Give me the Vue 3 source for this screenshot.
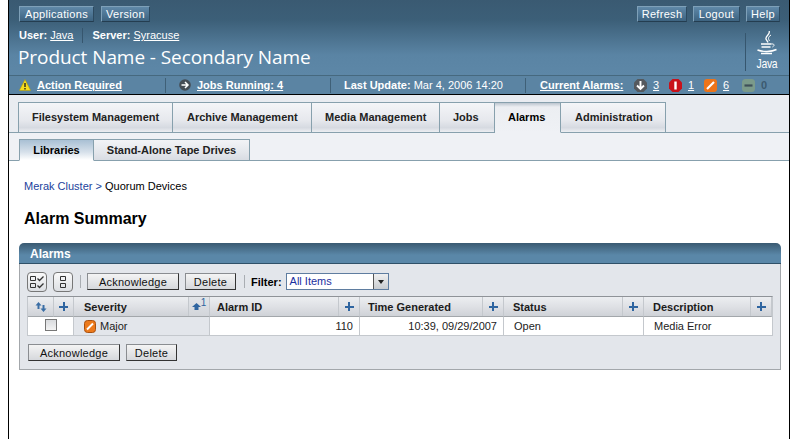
<template>
  <div class="page">
    <header class="masthead">
      <div class="top-row">
        <div class="btn-group left">
          <a class="mast-btn w-apps">Applications</a>
          <a class="mast-btn w-version">Version</a>
        </div>
        <div class="btn-group">
          <a class="mast-btn w-refresh">Refresh</a>
          <a class="mast-btn w-logout">Logout</a>
          <a class="mast-btn w-help">Help</a>
        </div>
      </div>
      <div class="brand-row">
        <div>
          <div class="user-row">
            <span class="user-cell"><b>User:</b> <u>Java</u></span>
            <span class="user-cell"><b>Server:</b> <u>Syracuse</u></span>
          </div>
          <div class="product">Product Name - Secondary Name</div>
        </div>
        <div class="java-logo">
          <svg width="22" height="26" viewBox="0 0 22 26" fill="none" stroke="#fff">
            <path d="M13 0c2 3-4 5-3 8 .4 1.200 1.400 2 2 3.500" stroke-width="1.300" />
            <path d="M15 4c-3 2-3 3.500-1.500 6" stroke-width="1" />
            <path d="M5 13h10M5.500 16h9" stroke-width="1.300" />
            <path d="M15 13c3.500-.5 4 1.500 1.500 3" stroke-width="1" />
            <path d="M1.500 19c5 2 14 2 19-.5M5 22.500h11" stroke-width="1.400" />
          </svg>
          <span class="java-word">Java</span>
        </div>
      </div>
    </header>

    <div class="status-bar">
      <div class="status-cell cell-action">
        <svg width="12" height="12" viewBox="0 0 12 12">
          <path d="M6 .5 11.700 11.500H.3z" fill="#f5dc1e" stroke="#b59a00" stroke-width=".5" />
          <path d="M5.300 4h1.400v4H5.300zM5.300 9h1.400v1.400H5.300z" fill="#222" />
        </svg>
        <u>Action Required</u>
      </div>
      <div class="status-cell cell-jobs">
        <svg width="12" height="12" viewBox="0 0 12 12">
          <circle cx="6" cy="6" r="5.800" fill="#444c54" />
          <path d="M2.500 6h6M6 3l3 3-3 3" fill="none" stroke="#fff" stroke-width="1.500" />
        </svg>
        <u>Jobs Running: 4</u>
      </div>
      <div class="status-cell cell-update"><b>Last Update:</b>&nbsp;Mar 4, 2006 14:20</div>
      <div class="status-cell cell-alarms">
        <u class="alarms-label">Current Alarms:</u>
        <span class="alarm-count w-down">
          <svg width="13" height="13" viewBox="0 0 13 13">
            <path d="M3.500 0h6L13 3.500v6L9.500 13h-6L0 9.500v-6z" fill="#55595e" />
            <path d="M6.500 2v8M3 6.500l3.500 3.500 3.500-3.500" fill="none" stroke="#fff" stroke-width="1.900" />
          </svg>
          <u>3</u>
        </span>
        <span class="alarm-count w-crit">
          <svg width="13" height="13" viewBox="0 0 13 13">
            <path d="M3.500 0h6L13 3.500v6L9.500 13h-6L0 9.500v-6z" fill="#c9111a" />
            <path d="M6.500 2.500v8" stroke="#fff" stroke-width="2.400" />
          </svg>
          <u>1</u>
        </span>
        <span class="alarm-count w-major">
          <svg width="13" height="13" viewBox="0 0 13 13">
            <rect width="13" height="13" rx="3" fill="#ee7418" />
            <path d="M3 10l7-7" stroke="#fff" stroke-width="2.200" />
          </svg>
          <u>6</u>
        </span>
        <span class="alarm-count zero">
          <svg width="13" height="13" viewBox="0 0 13 13">
            <rect width="13" height="13" rx="3.500" fill="#7b9a8a" />
            <path d="M2.500 6.500h8" stroke="#3f4f58" stroke-width="2.200" />
          </svg>
          0
        </span>
      </div>
    </div>

    <nav class="tabs">
      <a
        v-for="tab in tabs"
        :key="tab.label"
        :class="['tab', { active: tab.label === 'Alarms' }]"
        :style="{ width: tab.width + 'px', paddingLeft: tab.pad + 'px' }"
      >{{ tab.label }}</a>
    </nav>
    <nav class="subtabs">
      <a class="subtab active sub-libraries">Libraries</a>
      <a class="subtab sub-drives">Stand-Alone Tape Drives</a>
    </nav>

    <main class="content">
      <div class="breadcrumb"><span class="crumb-link">Merak Cluster &gt;</span> Quorum Devices</div>
      <h1 class="page-title">Alarm Summary</h1>

      <section class="panel">
        <div class="panel-head">Alarms</div>
        <div class="panel-body">
          <div class="toolbar">
            <button class="icon-btn">
              <svg width="14" height="14" viewBox="0 0 14 14" fill="none" stroke="#333">
                <path d="M.5 1.500h5v4h-5zM.5 8.500h5v4h-5z" />
                <path d="M7.500 3.500l2 2 4-4M7.500 10.500l2 2 4-4" stroke-width="1.300" />
              </svg>
            </button>
            <button class="icon-btn">
              <svg width="8" height="14" viewBox="0 0 8 14" fill="none" stroke="#333">
                <path d="M1.500 1.500h5v4h-5zM1.500 8.500h5v4h-5z" />
              </svg>
            </button>
            <span class="sep"></span>
            <button class="btn btn-ack">Acknowledge</button>
            <button class="btn btn-del">Delete</button>
            <span class="sep"></span>
            <label class="filter-label">Filter:</label>
            <div class="select">
              <span class="select-value">All Items</span>
              <span class="select-arrow"></span>
            </div>
          </div>

          <div class="grid">
            <div class="th th-sort">
              <svg width="12" height="10" viewBox="0 0 12 10" fill="#3a6ea5">
                <path d="M3.500 0 6.500 3.500H4.500V7H2.500V3.500H.5zM8.500 10 5.500 6.500h2V3h2v3.500h2z" />
              </svg>
            </div>
            <div class="th th-plus"><span class="plus"></span></div>
            <div class="th th-label th-severity">
              <span class="th-text">Severity</span>
              <span class="th-action">
                <svg width="9" height="7" viewBox="0 0 9 7" fill="#2f65a0"><path d="M4.500 0l4.500 4H6.500v3h-4V4H0z" /></svg>
                <sup class="sort-rank">1</sup>
              </span>
            </div>
            <div class="th th-label" v-for="col in columns" :key="col.label">
              <span class="th-text" :style="{ paddingLeft: col.pad + 'px' }">{{ col.label }}</span>
              <span class="th-action"><span class="plus"></span></span>
            </div>

            <div class="td td-check"><span class="checkbox"></span></div>
            <div class="td td-severity">
              <svg width="12" height="13" viewBox="0 0 12 13">
                <rect x=".5" y=".5" width="11" height="12" rx="3" fill="#ec7a1c" stroke="#a8500f" />
                <path d="M3 9.500l6-6" stroke="#fff" stroke-width="2" />
              </svg>
              Major
            </div>
            <div class="td right">110</div>
            <div class="td right">10:39, 09/29/2007</div>
            <div class="td">Open</div>
            <div class="td">Media Error</div>
          </div>

          <div class="bottom-actions">
            <button class="btn btn-ack">Acknowledge</button>
            <button class="btn btn-del">Delete</button>
          </div>
        </div>
      </section>
    </main>
  </div>
</template>

<script setup>
const tabs = [
  { label: 'Filesystem Management', width: 155, pad: 13 },
  { label: 'Archive Management', width: 139, pad: 14 },
  { label: 'Media Management', width: 128, pad: 13 },
  { label: 'Jobs', width: 55, pad: 13 },
  { label: 'Alarms', width: 66, pad: 13 },
  { label: 'Administration', width: 105, pad: 14 },
];

const columns = [
  { label: 'Alarm ID', pad: 7 },
  { label: 'Time Generated', pad: 8 },
  { label: 'Status', pad: 9 },
  { label: 'Description', pad: 9 },
];
</script>

<style>
html, body {
  margin: 0;
  background: #fff;
}
</style>

<style scoped>
.page {
  box-sizing: border-box;
  width: 782px;
  min-height: 439px;
  height: 439px;
  overflow: hidden;
  margin-left: 8px;
  border-left: 1px solid #000;
  border-right: 1px solid #000;
  font-family: "Liberation Sans", Arial, sans-serif;
  font-size: 11px;
  color: #000;
  background: #fff;
}

.masthead {
  height: 75px;
  box-sizing: border-box;
  padding: 6px 9px 0 10px;
  color: #fff;
  background: linear-gradient(#3a5a72 0, #3c5f78 20px, #5a84a4 55px, #5d87a7 75px);
}

.top-row {
  display: flex;
  justify-content: space-between;
}

.btn-group {
  display: flex;
  gap: 6px;
}

.btn-group.left {
  gap: 7px;
}

.mast-btn {
  height: 16px;
  line-height: 15px;
  box-sizing: border-box;
  text-align: center;
  color: #fff;
  background: linear-gradient(#5f88a8, #3d6380);
  border: 1px solid;
  border-color: #7ea0b8 #2d4a60 #243d50 #7ea0b8;
  letter-spacing: 0.3px;
}

.w-apps { width: 75px; }
.w-version { width: 49px; }
.w-refresh { width: 50px; }
.w-logout { width: 47px; }
.w-help { width: 34px; }

.brand-row {
  display: flex;
  justify-content: space-between;
  margin-top: 6px;
}

.user-row {
  display: flex;
  height: 15px;
  line-height: 15px;
}

.user-cell {
  padding-right: 9px;
  margin-right: 9px;
  border-right: 1px solid #36566e;
}

.user-cell:last-child {
  border-right: none;
}

.product {
  font-family: "Open Sans", sans-serif;
  font-size: 19px;
  line-height: 26px;
  letter-spacing: -0.07px;
  margin: 1px 0 0 -1px;
}

.java-logo {
  display: flex;
  flex-direction: column;
  align-items: center;
  width: 44px;
  height: 38px;
  border-left: 1px solid #36566e;
  margin-right: -9px;
  margin-top: 5px;
  padding-right: 1px;
  box-sizing: border-box;
}

.java-logo svg {
  margin-top: -2px;
  flex: none;
}

.java-word {
  font-size: 13px;
  line-height: 12px;
  letter-spacing: -0.4px;
  margin-top: 1px;
  transform: scaleX(0.8);
}

.status-bar {
  display: flex;
  height: 20px;
  box-sizing: border-box;
  align-items: center;
  color: #fff;
  background: #5b84a3;
  border-top: 1px solid #46697f;
  border-bottom: 1px solid #000;
  font-weight: bold;
}

.status-bar u {
  text-underline-offset: 1px;
}

.status-cell {
  display: flex;
  align-items: center;
  height: 15px;
  box-sizing: border-box;
  border-right: 1px solid #3f6077;
}

.status-cell svg {
  flex: none;
}

.cell-action {
  width: 157px;
  padding-left: 10px;
  gap: 6px;
}

.cell-jobs {
  width: 165px;
  padding-left: 13px;
  gap: 6px;
}

.cell-update {
  width: 195px;
  padding-left: 13px;
  font-weight: normal;
}

.cell-alarms {
  flex: 1;
  padding-left: 14px;
  border-right: none;
}

.alarms-label {
  width: 94px;
}

.alarm-count {
  display: flex;
  align-items: center;
  gap: 6px;
  font-weight: normal;
  width: 35px;
}

.w-major {
  width: 38px;
}

.zero {
  color: #3c5a70;
  font-weight: bold;
}

.tabs {
  display: flex;
  height: 38px;
  box-sizing: border-box;
  padding: 7px 0 0 9px;
  background: #e9ecf1;
  border-bottom: 1px solid #87a0ad;
}

.tab {
  height: 31px;
  box-sizing: border-box;
  display: flex;
  align-items: center;
  padding-bottom: 1px;
  font-weight: bold;
  color: #222;
  background: linear-gradient(#f4f5f8 0, #e6e8ed 60%, #d6dae1 85%, #eceef2 100%);
  border: 1px solid #87a0ad;
  border-left: none;
}

.tab:first-child {
  border-left: 1px solid #87a0ad;
}

.tab.active {
  background: linear-gradient(#bcc5cf 0, #eceef2 4px, #eff1f5 100%);
  border-bottom-color: #eff1f5;
  color: #000;
}

.subtabs {
  display: flex;
  height: 28px;
  box-sizing: border-box;
  padding: 6px 0 0 10px;
  background: #eff1f5;
  border-bottom: 1px solid #87a0ad;
}

.subtab {
  height: 22px;
  box-sizing: border-box;
  display: flex;
  align-items: center;
  justify-content: center;
  font-weight: bold;
  color: #222;
  background: linear-gradient(#f2f3f6 0, #e4e7ec 60%, #d8dce3 100%);
  border: 1px solid #87a0ad;
  border-left: none;
}

.sub-libraries {
  width: 75px;
  border-left: 1px solid #87a0ad;
}

.sub-drives {
  width: 156px;
}

.subtab.active {
  background: linear-gradient(#a9c0d4 0, #d6e0ea 60%, #fff 100%);
  border-bottom-color: #fff;
  color: #000;
}

.content {
  padding-top: 19px;
}

.breadcrumb {
  padding-left: 15px;
  line-height: 13px;
}

.crumb-link {
  color: #1c3f9c;
}

.page-title {
  margin: 16px 0 0 0;
  padding-left: 15px;
  font-size: 16px;
  line-height: 20px;
  font-weight: bold;
}

.panel {
  margin: 14px 8px 0 10px;
}

.panel-head {
  height: 21px;
  line-height: 22px;
  box-sizing: border-box;
  padding-left: 11px;
  color: #fff;
  font-weight: bold;
  font-size: 12px;
  border-radius: 5px 5px 0 0;
  background: linear-gradient(#3a5a72, #5a87a8 60%);
  border-bottom: 1px solid #2f5068;
}

.panel-body {
  height: 106px;
  box-sizing: border-box;
  padding: 7px 7px 0 7px;
  background: #e3e6eb;
  border: 1px solid #a3a7ab;
  border-top: none;
}

.toolbar {
  display: flex;
  align-items: center;
  height: 21px;
}

.icon-btn {
  width: 20px;
  height: 20px;
  padding: 0;
  margin-right: 6px;
  display: flex;
  align-items: center;
  justify-content: center;
  background: linear-gradient(#fafafa, #dcdfe3);
  border: 1px solid #777;
  border-radius: 4px;
}

.sep {
  width: 1px;
  height: 13px;
  background: #a9adb2;
  margin: 0 6px 0 1px;
}

.btn {
  height: 17px;
  padding: 0;
  font-family: inherit;
  font-size: 11px;
  letter-spacing: 0.25px;
  color: #111;
  background: linear-gradient(#f4f4f4, #d6d8dc);
  border: 1px solid;
  border-color: #8a8d91 #333 #333 #8a8d91;
}

.btn-ack {
  width: 92px;
}

.btn-del {
  width: 51px;
  margin-left: 6px;
}

.toolbar .btn-del {
  margin-right: 7px;
}

.filter-label {
  font-weight: bold;
  margin-right: 4px;
}

.select {
  display: flex;
  width: 103px;
  height: 17px;
  box-sizing: border-box;
  background: #fff;
  border: 1px solid #5f7da0;
}

.select-value {
  flex: 1;
  line-height: 15px;
  padding-left: 3px;
  color: #1c2fa0;
}

.select-arrow {
  width: 14px;
  position: relative;
  background: linear-gradient(#f0f0f0, #c9ccd0);
  border-left: 1px solid #555;
}

.select-arrow::after {
  content: "";
  position: absolute;
  left: 4px;
  top: 6px;
  border: 3px solid transparent;
  border-top: 4px solid #222;
  border-bottom: none;
}

.grid {
  display: grid;
  grid-template-columns: 26px 20px 136px 150px 144px 140px 128px;
  grid-template-rows: 20px 18px;
  width: 746px;
  margin-top: 4px;
  background: #fff;
  border: 1px solid #c4c8cd;
  border-top: 1px solid #8f9398;
  box-sizing: border-box;
}

.th {
  display: flex;
  align-items: center;
  box-sizing: border-box;
  background: linear-gradient(#eceef1, #dfe1e5 50%, #cfd2d7);
  border-bottom: 1px solid #a3a7ab;
  border-right: 1px solid #c4c8cd;
}

.th-sort,
.th-plus {
  justify-content: center;
}

.th-label {
  justify-content: space-between;
  font-weight: bold;
  color: #1b1b1b;
}

.th-label:last-of-type {
  border-right: none;
}

.th-severity .th-text {
  padding-left: 10px;
}

.th-severity .th-action {
  background: linear-gradient(#e2e5e9, #d2d5da);
}

.th-action {
  width: 20px;
  height: 100%;
  flex: none;
  display: flex;
  align-items: center;
  justify-content: center;
  border-left: 1px solid #c4c8cd;
}

.sort-rank {
  font-size: 10px;
  font-weight: normal;
  line-height: 10px;
  margin: -7px 0 0 0;
  color: #2f65a0;
}

.plus {
  width: 9px;
  height: 9px;
  background:
    linear-gradient(#2f65a0, #2f65a0) center / 9px 2px no-repeat,
    linear-gradient(#2f65a0, #2f65a0) center / 2px 9px no-repeat;
}

.td {
  display: flex;
  align-items: center;
  box-sizing: border-box;
  padding: 0 6px 0 10px;
  border-right: 1px solid #c4c8cd;
  background: #fff;
  color: #222;
}

.td:last-child {
  border-right: none;
}

.td.right {
  justify-content: flex-end;
}

.td-check {
  grid-column: span 2;
  justify-content: center;
  padding: 0;
}

.td-severity {
  gap: 4px;
  padding-left: 10px;
  background: #e3e6eb;
}

.checkbox {
  width: 10px;
  height: 10px;
  background: linear-gradient(#d9dbde, #f3f3f3);
  border: 1px solid #777;
  margin-bottom: 2px;
}

.bottom-actions {
  display: flex;
  margin: 8px 0 0 1px;
}
</style>
